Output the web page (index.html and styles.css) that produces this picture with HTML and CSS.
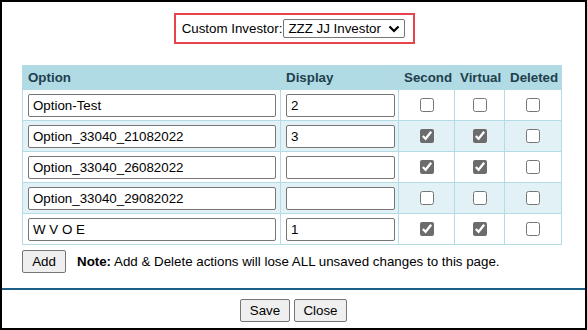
FILE: index.html
```html
<html>

<head>
	<link rel="stylesheet" href="styles.css">
</head>

<body>
	<div id="dialog">
		<div id="investor-bar">
			<div id="investor-box">
				<label for="investor">Custom Investor:</label>
				<div class="fake-select">
					<span>ZZZ JJ Investor</span>
					<svg width="12" height="8" viewBox="0 0 12 8">
						<path d="M1.5 1.5 L6 6 L10.5 1.5" fill="none" stroke="#000" stroke-width="2.2" />
					</svg>
				</div>
			</div>
		</div>
		<table id="options">
			<colgroup>
				<col class="col-option">
				<col class="col-display">
				<col class="col-second">
				<col class="col-virtual">
				<col class="col-deleted">
			</colgroup>
			<thead>
				<tr>
					<th class="left">Option</th>
					<th class="left">Display</th>
					<th>Second</th>
					<th>Virtual</th>
					<th>Deleted</th>
				</tr>
			</thead>
			<tbody>
				<tr>
					<td><input class="opt-name" type="text" value="Option-Test"></td>
					<td><input class="opt-display" type="text" value="2"></td>
					<td><input type="checkbox"></td>
					<td><input type="checkbox"></td>
					<td><input type="checkbox"></td>
				</tr>
				<tr class="alt">
					<td><input class="opt-name" type="text" value="Option_33040_21082022"></td>
					<td><input class="opt-display" type="text" value="3"></td>
					<td><input type="checkbox" checked></td>
					<td><input type="checkbox" checked></td>
					<td><input type="checkbox"></td>
				</tr>
				<tr>
					<td><input class="opt-name" type="text" value="Option_33040_26082022"></td>
					<td><input class="opt-display" type="text" value=""></td>
					<td><input type="checkbox" checked></td>
					<td><input type="checkbox" checked></td>
					<td><input type="checkbox"></td>
				</tr>
				<tr class="alt">
					<td><input class="opt-name" type="text" value="Option_33040_29082022"></td>
					<td><input class="opt-display" type="text" value=""></td>
					<td><input type="checkbox"></td>
					<td><input type="checkbox"></td>
					<td><input type="checkbox"></td>
				</tr>
				<tr>
					<td><input class="opt-name" type="text" value="W V O E"></td>
					<td><input class="opt-display" type="text" value="1"></td>
					<td><input type="checkbox" checked></td>
					<td><input type="checkbox" checked></td>
					<td><input type="checkbox"></td>
				</tr>
			</tbody>
		</table>
		<div id="add-row">
			<button class="btn" id="add-btn">Add</button>
			<span><b>Note:</b> Add &amp; Delete actions will lose ALL unsaved changes to this page.</span>
		</div>
		<div id="footer">
			<button class="btn" id="save-btn">Save</button>
			<button class="btn" id="close-btn">Close</button>
		</div>
	</div>
</body>

</html>
```

FILE: styles.css
```css
body {
	margin: 0;
	font-family: "Liberation Sans", Arial, sans-serif;
	font-size: 13.33px;
	color: #000;
}

#dialog {
	width: 587px;
	height: 330px;
	box-sizing: border-box;
	border: 2px solid #000;
	background: #fff;
	display: flex;
	flex-direction: column;
}

#investor-bar {
	display: flex;
	justify-content: center;
	padding-top: 11px;
	padding-left: 2px;
}

#investor-box {
	display: flex;
	align-items: center;
	gap: 1px;
	border: 2px solid #e8424a;
	height: 27px;
	padding: 0 8px 0 6px;
}

.fake-select {
	display: flex;
	align-items: center;
	justify-content: space-between;
	width: 122px;
	height: 19px;
	box-sizing: border-box;
	border: 1px solid #767676;
	border-radius: 2px;
	padding: 0 4px 0 4px;
}

#options {
	border-collapse: collapse;
	table-layout: fixed;
	margin: 21px 0 0 20px;
	width: 539px;
	font-family: "Liberation Sans", Arial, sans-serif;
	font-size: 13.33px;
}

.col-option {
	width: 258px;
}

.col-display {
	width: 118px;
}

.col-second {
	width: 56px;
}

.col-virtual {
	width: 50px;
}

.col-deleted {
	width: 57px;
}

#options th,
#options td {
	border: 1px solid #b4dce6;
}

#options th {
	background: #b0dbe5;
	color: #22404c;
	height: 24px;
	padding: 0 5px;
	text-align: center;
	font-weight: bold;
	white-space: nowrap;
}

#options th.left {
	text-align: left;
}

#options td {
	height: 31px;
	padding: 0 5px;
	text-align: center;
}

#options tr.alt td {
	background: #e1f1f6;
}

input[type="text"] {
	display: block;
	box-sizing: border-box;
	height: 23px;
	border: 1px solid #767676;
	border-radius: 2px;
	padding: 0 4px;
	font-family: "Liberation Sans", Arial, sans-serif;
	font-size: 13.33px;
	color: #000;
	background: #fff;
}

.opt-name {
	width: 248px;
}

.opt-display {
	width: 109px;
}

input[type="checkbox"] {
	width: 14px;
	height: 14px;
	margin: 0;
	vertical-align: middle;
	accent-color: #6c6c6c;
}

#add-row {
	display: flex;
	align-items: center;
	gap: 11px;
	margin: 5px 0 0 20px;
}

.btn {
	font-family: "Liberation Sans", Arial, sans-serif;
	font-size: 13.33px;
	background: #efefef;
	border: 1px solid #767676;
	border-radius: 2px;
	height: 23px;
	padding: 0 8px;
	color: #000;
}

#add-btn {
	width: 44px;
}

#footer {
	margin-top: 15px;
	border-top: 2px solid #1b5e8a;
	display: flex;
	justify-content: center;
	gap: 4px;
	padding-top: 9px;
}

#save-btn {
	width: 50px;
}

#close-btn {
	width: 53px;
}
```
